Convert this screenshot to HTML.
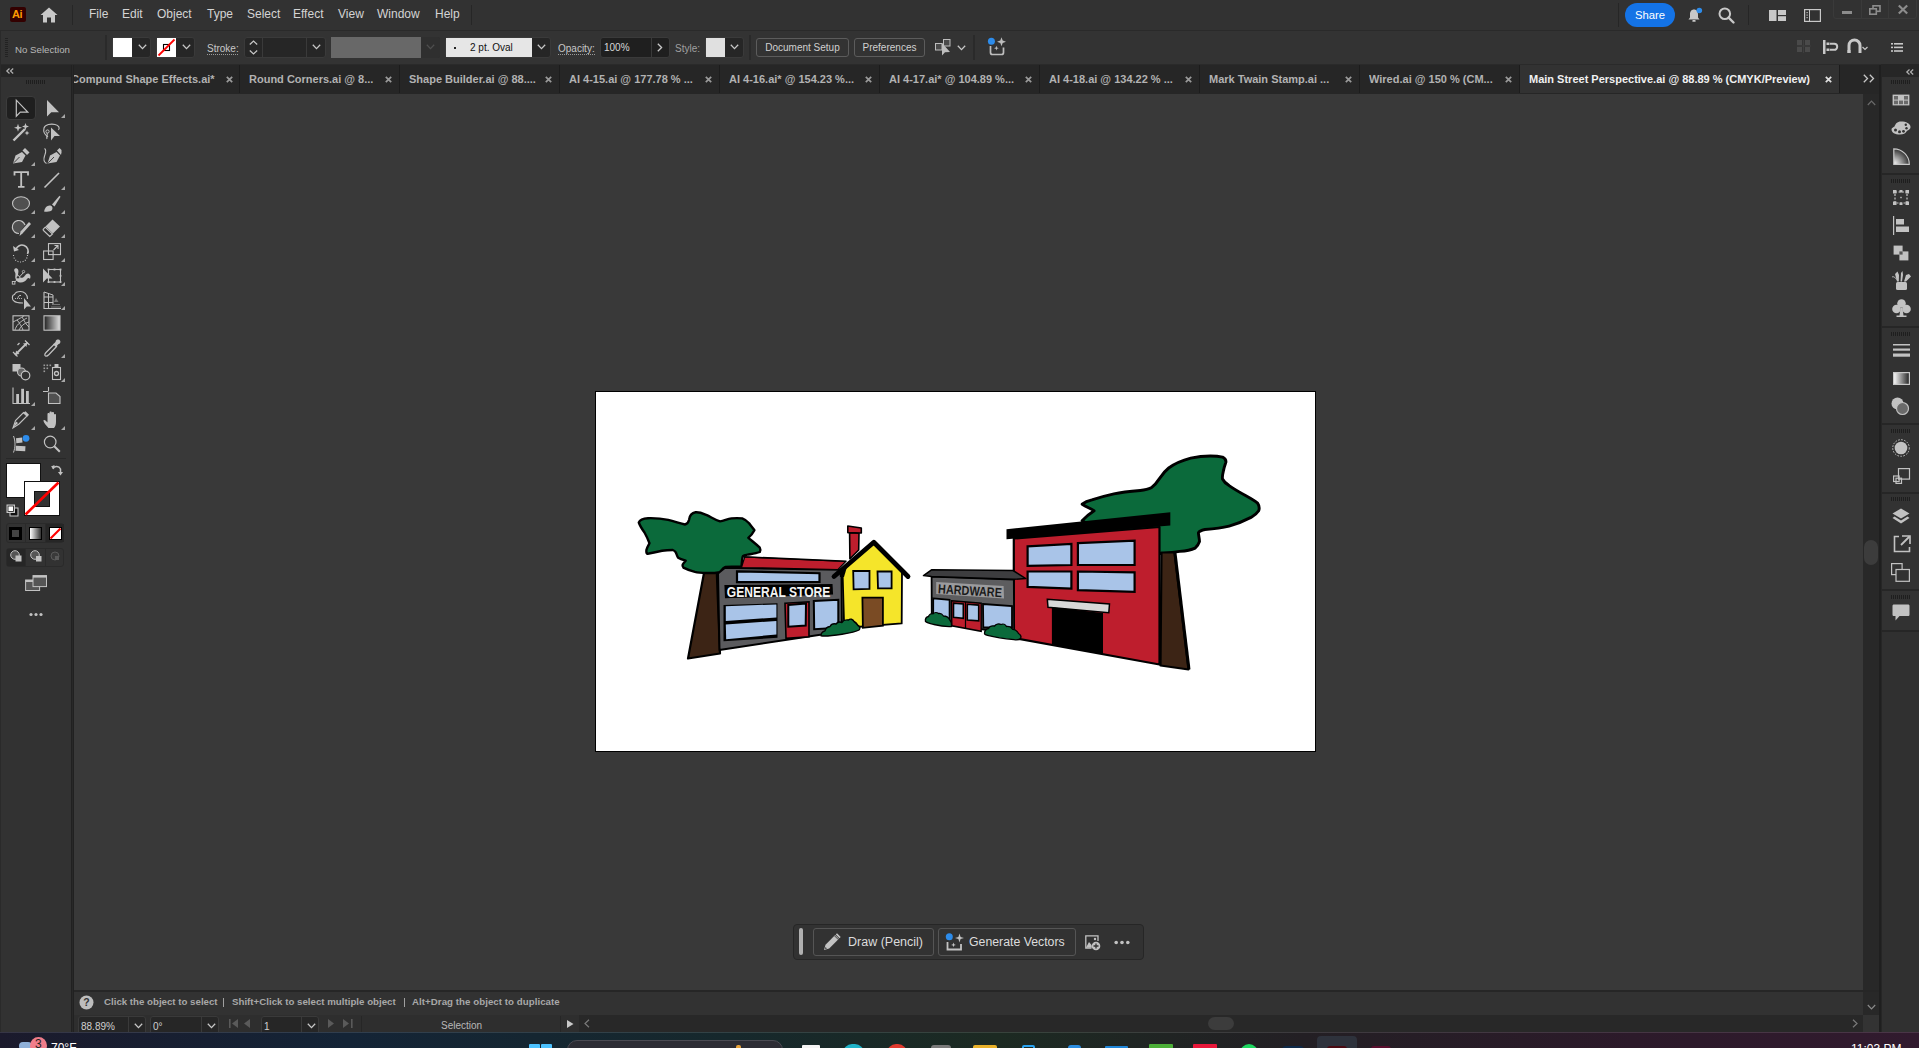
<!DOCTYPE html>
<html><head><meta charset="utf-8">
<style>
*{margin:0;padding:0;box-sizing:border-box}
html,body{width:1919px;height:1048px;overflow:hidden;background:#2b2b2b;font-family:"Liberation Sans",sans-serif;color:#c8c8c8}
.a{position:absolute}
.t{position:absolute;white-space:nowrap;line-height:1}
.mi{position:absolute;top:7px;font-size:12px;color:#d4d4d4;white-space:nowrap;line-height:14px}
.lbl{position:absolute;font-size:10px;color:#c4c4c4;white-space:nowrap;line-height:12px}
.dd{position:absolute;background:#262626;border:1px solid #3a3a3a;border-radius:3px}
.btn{position:absolute;border:1px solid #5c5c5c;border-radius:3px;font-size:10px;color:#d0d0d0;text-align:center;line-height:17px;white-space:nowrap}
.tab{position:absolute;top:74px;font-size:11px;font-weight:700;color:#b2b2b2;white-space:nowrap;line-height:11px;overflow:hidden}
.tsep{position:absolute;top:65px;width:1px;height:28px;background:#1c1c1c}
svg{position:absolute;overflow:visible}
</style></head>
<body>
<!-- ===== MENU BAR ===== -->
<div class="a" style="left:0;top:0;width:1919px;height:30px;background:#323232"></div>
<div class="a" style="left:10px;top:7px;width:16px;height:15px;background:#330000;border-radius:2px"></div>
<div class="t" style="left:12px;top:9px;font-size:11px;font-weight:700;color:#ff9a00;letter-spacing:-0.5px">Ai</div>
<svg style="left:40px;top:7px" width="18" height="16" viewBox="0 0 18 16"><path d="M9 0.5L17.5 8H15V15.5H11V10.5H7V15.5H3V8H0.5Z" fill="#c8c8c8"/></svg>
<div class="a" style="left:72px;top:5px;width:1px;height:20px;background:#262626"></div>
<div class="mi" style="left:89px">File</div>
<div class="mi" style="left:122px">Edit</div>
<div class="mi" style="left:157px">Object</div>
<div class="mi" style="left:207px">Type</div>
<div class="mi" style="left:247px">Select</div>
<div class="mi" style="left:293px">Effect</div>
<div class="mi" style="left:338px">View</div>
<div class="mi" style="left:377px">Window</div>
<div class="mi" style="left:435px">Help</div>
<div class="a" style="left:471px;top:5px;width:1px;height:20px;background:#262626"></div>
<!-- right of menubar -->
<div class="a" style="left:1618px;top:3px;width:1px;height:24px;background:#262626"></div>
<div class="a" style="left:1625px;top:3px;width:50px;height:24px;background:#1473e6;border-radius:12px"></div>
<div class="t" style="left:1635px;top:10px;font-size:11.3px;color:#fff">Share</div>
<svg style="left:1687px;top:8px" width="16" height="15" viewBox="0 0 16 15"><path d="M7 1.5C4.2 1.5 3 3.8 3 6.5V9.5L1.5 11.5H12.5L11 9.5V6.5C11 3.8 9.8 1.5 7 1.5Z" fill="#c8c8c8"/><rect x="5.3" y="12" width="3.4" height="1.8" rx="0.9" fill="#c8c8c8"/><circle cx="12.3" cy="2.5" r="2.8" fill="#2d8ceb"/></svg>
<svg style="left:1718px;top:7px" width="17" height="17" viewBox="0 0 17 17"><circle cx="6.8" cy="6.8" r="5.3" fill="none" stroke="#c8c8c8" stroke-width="2"/><path d="M10.6 10.6L15.5 15.5" stroke="#c8c8c8" stroke-width="2.4" stroke-linecap="round"/></svg>
<div class="a" style="left:1748px;top:5px;width:1px;height:20px;background:#262626"></div>
<svg style="left:1769px;top:10px" width="17" height="12" viewBox="0 0 17 12"><rect x="0" y="0" width="7.5" height="11" fill="#c8c8c8"/><rect x="9" y="0" width="8" height="5" fill="#c8c8c8"/><rect x="9" y="6.2" width="8" height="4.8" fill="#c8c8c8"/></svg>
<svg style="left:1804px;top:9px" width="17" height="13" viewBox="0 0 17 13"><rect x="0.6" y="0.6" width="15.8" height="11.8" fill="none" stroke="#c8c8c8" stroke-width="1.2"/><rect x="2.5" y="3" width="1.2" height="1.2" fill="#c8c8c8"/><rect x="2.5" y="5.5" width="1.2" height="1.2" fill="#c8c8c8"/><rect x="2.5" y="8" width="1.2" height="1.2" fill="#c8c8c8"/><rect x="5" y="1" width="1" height="11" fill="#c8c8c8"/></svg>
<div class="a" style="left:1833px;top:-1px;width:84px;height:20px;border:1px solid #3a3a3a;border-radius:0 0 3px 3px"></div>
<div class="a" style="left:1861px;top:0;width:1px;height:18px;background:#3a3a3a"></div>
<div class="a" style="left:1888px;top:0;width:1px;height:18px;background:#3a3a3a"></div>
<div class="a" style="left:1842px;top:11px;width:10px;height:3px;background:#8c8c8c"></div>
<svg style="left:1869px;top:5px" width="12" height="10" viewBox="0 0 12 10"><rect x="4" y="0.8" width="7" height="5.5" fill="none" stroke="#8c8c8c" stroke-width="1.6"/><rect x="0.8" y="3.8" width="6.5" height="5.4" fill="#323232" stroke="#8c8c8c" stroke-width="1.6"/></svg>
<svg style="left:1898px;top:5px" width="10" height="9" viewBox="0 0 10 9"><path d="M0.8 0.5L9.2 8.5M9.2 0.5L0.8 8.5" stroke="#8c8c8c" stroke-width="2.2"/></svg>

<!-- ===== OPTIONS BAR ===== -->
<div class="a" style="left:0;top:30px;width:1919px;height:35px;background:#2a2a2a"></div>
<div class="a" style="left:1px;top:31px;width:1918px;height:33px;background:#333333"></div>
<div id="grip1" class="a" style="left:5px;top:38px;width:3px;height:20px;background:repeating-linear-gradient(180deg,#222 0 1px,transparent 1px 2px)"></div>
<div class="lbl" style="left:15px;top:44px;font-size:9.7px;color:#b8b8b8">No Selection</div>
<div class="a" style="left:105px;top:35px;width:2px;height:25px;background:#2a2a2a"></div>
<!-- fill -->
<div class="dd" style="left:112px;top:37px;width:39px;height:21px"></div>
<div class="a" style="left:113px;top:38px;width:19px;height:19px;background:#fff"></div>
<svg style="left:138px;top:44px" width="9" height="6" viewBox="0 0 9 6"><path d="M0.8 0.8L4.5 4.6L8.2 0.8" fill="none" stroke="#c8c8c8" stroke-width="1.3"/></svg>
<!-- stroke -->
<div class="dd" style="left:156px;top:37px;width:39px;height:21px"></div>
<svg style="left:157px;top:38px" width="19" height="19" viewBox="0 0 19 19"><rect width="19" height="19" fill="#fff"/><rect x="6.5" y="6.5" width="6" height="6" fill="none" stroke="#000" stroke-width="1.1"/><path d="M1.5 17.5L17.5 1.5" stroke="#f00" stroke-width="1.8"/></svg>
<svg style="left:182px;top:44px" width="9" height="6" viewBox="0 0 9 6"><path d="M0.8 0.8L4.5 4.6L8.2 0.8" fill="none" stroke="#c8c8c8" stroke-width="1.3"/></svg>
<div class="lbl" style="left:207px;top:43px;color:#c8c8c8">Stroke:</div>
<div class="a" style="left:207px;top:54px;width:31px;height:1px;background:repeating-linear-gradient(90deg,#9a9a9a 0 1px,transparent 1px 2px)"></div>
<!-- stroke weight -->
<div class="dd" style="left:244px;top:37px;width:82px;height:21px"></div>
<div class="a" style="left:262px;top:38px;width:1px;height:19px;background:#3a3a3a"></div>
<div class="a" style="left:306px;top:38px;width:1px;height:19px;background:#3a3a3a"></div>
<svg style="left:249px;top:40px" width="9" height="15" viewBox="0 0 9 15"><path d="M0.8 4.5L4.5 1L8.2 4.5M0.8 10.5L4.5 14L8.2 10.5" fill="none" stroke="#c8c8c8" stroke-width="1.2"/></svg>
<svg style="left:312px;top:44px" width="9" height="6" viewBox="0 0 9 6"><path d="M0.8 0.8L4.5 4.6L8.2 0.8" fill="none" stroke="#c8c8c8" stroke-width="1.3"/></svg>
<!-- profile -->
<div class="a" style="left:331px;top:37px;width:109px;height:21px;background:#2f2f2f;border-radius:2px"></div>
<div class="a" style="left:331px;top:37px;width:90px;height:21px;background:#686868"></div>
<svg style="left:426px;top:44px" width="9" height="6" viewBox="0 0 9 6"><path d="M0.8 0.8L4.5 4.6L8.2 0.8" fill="none" stroke="#4e4e4e" stroke-width="1.3"/></svg>
<!-- brush -->
<div class="dd" style="left:445px;top:37px;width:106px;height:21px"></div>
<div class="a" style="left:446px;top:38px;width:86px;height:19px;background:#e6e6e6"></div>
<div class="a" style="left:454px;top:47px;width:2px;height:2px;background:#222"></div>
<div class="t" style="left:470px;top:43px;font-size:10px;color:#111">2 pt. Oval</div>
<svg style="left:537px;top:44px" width="9" height="6" viewBox="0 0 9 6"><path d="M0.8 0.8L4.5 4.6L8.2 0.8" fill="none" stroke="#c8c8c8" stroke-width="1.3"/></svg>
<div class="lbl" style="left:558px;top:43px;color:#c8c8c8">Opacity:</div>
<div class="a" style="left:558px;top:54px;width:37px;height:1px;background:repeating-linear-gradient(90deg,#9a9a9a 0 1px,transparent 1px 2px)"></div>
<div class="dd" style="left:600px;top:37px;width:70px;height:21px;background:#1f1f1f"></div>
<div class="a" style="left:651px;top:38px;width:1px;height:19px;background:#3a3a3a"></div>
<div class="t" style="left:604px;top:43px;font-size:10px;color:#d8d8d8">100%</div>
<svg style="left:657px;top:43px" width="6" height="9" viewBox="0 0 6 9"><path d="M0.8 0.8L4.6 4.5L0.8 8.2" fill="none" stroke="#c8c8c8" stroke-width="1.3"/></svg>
<div class="lbl" style="left:675px;top:43px;color:#a0a0a0">Style:</div>
<div class="dd" style="left:705px;top:37px;width:39px;height:21px"></div>
<div class="a" style="left:706px;top:38px;width:19px;height:19px;background:#e0e0e0"></div>
<svg style="left:730px;top:44px" width="9" height="6" viewBox="0 0 9 6"><path d="M0.8 0.8L4.5 4.6L8.2 0.8" fill="none" stroke="#c8c8c8" stroke-width="1.3"/></svg>
<div class="a" style="left:749px;top:35px;width:2px;height:25px;background:#2a2a2a"></div>
<div class="btn" style="left:756px;top:38px;width:93px;height:19px">Document Setup</div>
<div class="btn" style="left:854px;top:38px;width:71px;height:19px">Preferences</div>
<svg style="left:935px;top:39px" width="17" height="17" viewBox="0 0 17 17"><rect x="0.5" y="4.5" width="6.5" height="6.5" fill="#4a4a4a" stroke="#bdbdbd" stroke-width="1"/><rect x="8.5" y="0.5" width="6.5" height="6.5" fill="#4a4a4a" stroke="#bdbdbd" stroke-width="1"/><path d="M7 4V16.5L10 13.2L15 13Z" fill="#bdbdbd"/></svg>
<svg style="left:957px;top:45px" width="9" height="6" viewBox="0 0 9 6"><path d="M0.8 0.8L4.5 4.6L8.2 0.8" fill="none" stroke="#c8c8c8" stroke-width="1.3"/></svg>
<div class="a" style="left:973px;top:35px;width:2px;height:25px;background:#2a2a2a"></div>
<svg style="left:987px;top:37px" width="20" height="19" viewBox="0 0 20 19"><path d="M3.5 9V15.5Q3.5 17.5 5.5 17.5H14.5Q16.5 17.5 16.5 15.5V10.5" fill="none" stroke="#bdbdbd" stroke-width="1.7"/><path d="M14.5 0.3L15.7 3.6L19 4.8L15.7 6L14.5 9.3L13.3 6L10 4.8L13.3 3.6Z" fill="#bdbdbd"/><path d="M9.4 8.8L10 10.6L11.8 11.2L10 11.8L9.4 13.6L8.8 11.8L7 11.2L8.8 10.6Z" fill="#bdbdbd"/><circle cx="4.4" cy="4.3" r="3.5" fill="#2d8ceb"/></svg>
<!-- right side options -->
<svg style="left:1797px;top:40px" width="14" height="13" viewBox="0 0 14 13"><rect x="0" y="0" width="5" height="5" fill="#4a4a4a"/><rect x="8" y="0" width="5" height="5" fill="#4a4a4a"/><rect x="0" y="7" width="5" height="5" fill="#4a4a4a"/><rect x="8" y="7" width="5" height="5" fill="#4a4a4a"/><rect x="6" y="0" width="1" height="13" fill="#3e3e3e"/><rect x="0" y="5.5" width="14" height="1" fill="#3e3e3e"/></svg>
<svg style="left:1823px;top:40px" width="15" height="14" viewBox="0 0 15 14"><rect x="0" y="0" width="2.5" height="14" fill="#c8c8c8"/><rect x="3.5" y="2.5" width="3" height="2.5" fill="#c8c8c8"/><rect x="3.5" y="8.5" width="3" height="2.5" fill="#c8c8c8"/><path d="M7 3.8H11.2A3 3 0 0 1 11.2 9.8H7" fill="none" stroke="#c8c8c8" stroke-width="2"/></svg>
<svg style="left:1847px;top:39px" width="23" height="14" viewBox="0 0 23 14"><path d="M2 14V6.5A5.5 5.5 0 0 1 13 6.5V14" fill="none" stroke="#c8c8c8" stroke-width="3"/><rect x="0.5" y="11" width="3" height="3" fill="#c8c8c8"/><path d="M15.5 8L18 10.5L20.5 8" fill="none" stroke="#c8c8c8" stroke-width="1.2"/></svg>
<svg style="left:1891px;top:43px" width="12" height="9" viewBox="0 0 12 9"><rect x="0" y="0" width="2" height="1.6" fill="#c8c8c8"/><rect x="3" y="0" width="9" height="1.6" fill="#c8c8c8"/><rect x="0" y="3.6" width="2" height="1.6" fill="#c8c8c8"/><rect x="3" y="3.6" width="9" height="1.6" fill="#c8c8c8"/><rect x="0" y="7.2" width="2" height="1.6" fill="#c8c8c8"/><rect x="3" y="7.2" width="9" height="1.6" fill="#c8c8c8"/></svg>

<!-- ===== TABS ===== -->
<div class="a" style="left:0;top:65px;width:1919px;height:29px;background:#262626"></div>
<svg style="left:226px;top:76px" width="7" height="7" viewBox="0 0 7 7"><path d="M0.8 0.8L6.2 6.2M6.2 0.8L0.8 6.2" stroke="#9a9a9a" stroke-width="1.7"/></svg>
<div class="tsep" style="left:239px"></div>
<svg style="left:385px;top:76px" width="7" height="7" viewBox="0 0 7 7"><path d="M0.8 0.8L6.2 6.2M6.2 0.8L0.8 6.2" stroke="#9a9a9a" stroke-width="1.7"/></svg>
<div class="tsep" style="left:399px"></div>
<svg style="left:545px;top:76px" width="7" height="7" viewBox="0 0 7 7"><path d="M0.8 0.8L6.2 6.2M6.2 0.8L0.8 6.2" stroke="#9a9a9a" stroke-width="1.7"/></svg>
<div class="tsep" style="left:559px"></div>
<svg style="left:705px;top:76px" width="7" height="7" viewBox="0 0 7 7"><path d="M0.8 0.8L6.2 6.2M6.2 0.8L0.8 6.2" stroke="#9a9a9a" stroke-width="1.7"/></svg>
<div class="tsep" style="left:719px"></div>
<svg style="left:865px;top:76px" width="7" height="7" viewBox="0 0 7 7"><path d="M0.8 0.8L6.2 6.2M6.2 0.8L0.8 6.2" stroke="#9a9a9a" stroke-width="1.7"/></svg>
<div class="tsep" style="left:879px"></div>
<svg style="left:1025px;top:76px" width="7" height="7" viewBox="0 0 7 7"><path d="M0.8 0.8L6.2 6.2M6.2 0.8L0.8 6.2" stroke="#9a9a9a" stroke-width="1.7"/></svg>
<div class="tsep" style="left:1039px"></div>
<svg style="left:1185px;top:76px" width="7" height="7" viewBox="0 0 7 7"><path d="M0.8 0.8L6.2 6.2M6.2 0.8L0.8 6.2" stroke="#9a9a9a" stroke-width="1.7"/></svg>
<div class="tsep" style="left:1199px"></div>
<svg style="left:1345px;top:76px" width="7" height="7" viewBox="0 0 7 7"><path d="M0.8 0.8L6.2 6.2M6.2 0.8L0.8 6.2" stroke="#9a9a9a" stroke-width="1.7"/></svg>
<div class="tsep" style="left:1359px"></div>
<svg style="left:1505px;top:76px" width="7" height="7" viewBox="0 0 7 7"><path d="M0.8 0.8L6.2 6.2M6.2 0.8L0.8 6.2" stroke="#9a9a9a" stroke-width="1.7"/></svg>
<div class="a" style="left:73px;top:65px;width:150px;height:28px;overflow:hidden"><div class="tab" style="left:-2px;top:9px">Compund Shape Effects.ai*</div></div>
<div class="tab" style="left:249px">Round Corners.ai @ 8...</div>
<div class="tab" style="left:409px">Shape Builder.ai @ 88....</div>
<div class="tab" style="left:569px">AI 4-15.ai @ 177.78 % ...</div>
<div class="tab" style="left:729px">AI 4-16.ai* @ 154.23 %...</div>
<div class="tab" style="left:889px">AI 4-17.ai* @ 104.89 %...</div>
<div class="tab" style="left:1049px">AI 4-18.ai @ 134.22 % ...</div>
<div class="tab" style="left:1209px">Mark Twain Stamp.ai ...</div>
<div class="tab" style="left:1369px">Wired.ai @ 150 % (CM...</div>
<div class="tsep" style="left:1519px"></div>
<div class="a" style="left:1520px;top:65px;width:319px;height:28px;background:#323232"></div><div class="tsep" style="left:1839px"></div>
<div class="tab" style="left:1529px;color:#f0f0f0">Main Street Perspective.ai @ 88.89 % (CMYK/Preview)</div>
<svg style="left:1825px;top:76px" width="7" height="7" viewBox="0 0 7 7"><path d="M0.8 0.8L6.2 6.2M6.2 0.8L0.8 6.2" stroke="#e0e0e0" stroke-width="1.7"/></svg>
<svg style="left:1863px;top:74px" width="12" height="9" viewBox="0 0 12 9"><path d="M0.8 0.8L4.5 4.5L0.8 8.2M6.8 0.8L10.5 4.5L6.8 8.2" fill="none" stroke="#c8c8c8" stroke-width="1.3"/></svg>
<!-- ===== LEFT TOOLBAR ===== -->
<div class="a" style="left:0;top:65px;width:74px;height:967px;background:#212121"></div><div class="a" style="left:0;top:65px;width:1px;height:967px;background:#2a2a2a"></div><div class="a" style="left:72px;top:65px;width:1px;height:967px;background:#282828"></div>
<div class="a" style="left:1px;top:65px;width:70px;height:12px;background:#262626"></div>
<svg style="left:6px;top:68px" width="8" height="6" viewBox="0 0 8 6"><path d="M3.5 0.5L0.8 3L3.5 5.5M7.2 0.5L4.5 3L7.2 5.5" fill="none" stroke="#b0b0b0" stroke-width="1.2"/></svg>
<div class="a" style="left:1px;top:77px;width:70px;height:955px;background:#323232"></div>
<div class="a" style="left:26px;top:80px;width:20px;height:4px;background:repeating-linear-gradient(90deg,#1e1e1e 0 1px,transparent 1px 2px)"></div>
<div class="a" style="left:6px;top:96px;width:30px;height:24px;background:#1f1f1f;border:1px solid #3c3c3c;border-radius:4px"></div>
<svg style="left:12px;top:99px" width="18" height="18" viewBox="0 0 18 18"><path d="M4.3 1.2V17.2L8.3 13.2L15.8 13.2Z" fill="#1f1f1f" stroke="#c2c2c2" stroke-width="1.2" stroke-linejoin="miter"/></svg>
<svg style="left:42.5px;top:99px" width="18" height="18" viewBox="0 0 18 18"><path d="M4 1V17.5L8.3 13.3L16 13.3Z" fill="#c2c2c2"/></svg>
<svg style="left:61px;top:114px" width="4" height="4" viewBox="0 0 4 4"><path d="M4 0V4H0Z" fill="#a8a8a8"/></svg>
<svg style="left:12px;top:123px" width="18" height="18" viewBox="0 0 18 18"><path d="M1.5 17.5L13 6" stroke="#c2c2c2" stroke-width="2.4"/><path d="M6 0.8L7 3.8L10 4.8L7 5.8L6 8.8L5 5.8L2 4.8L5 3.8Z" fill="#c2c2c2"/><path d="M13.5 0L14.4 2.6L17 3.5L14.4 4.4L13.5 7L12.6 4.4L10 3.5L12.6 2.6Z" fill="#c2c2c2"/><path d="M15 7.5L15.7 9.3L17.5 10L15.7 10.7L15 12.5L14.3 10.7L12.5 10L14.3 9.3Z" fill="#c2c2c2"/></svg>
<svg style="left:42.5px;top:123px" width="18" height="18" viewBox="0 0 18 18"><path d="M5 14C2 12 0 9 1 5C2 1.5 8 0.5 12 1.5C16 2.5 17 5 15.5 7" fill="none" stroke="#c2c2c2" stroke-width="1.1"/><circle cx="4.5" cy="8.5" r="1.6" fill="none" stroke="#c2c2c2" stroke-width="1"/><path d="M4 10C5 12 3 14 4 16" fill="none" stroke="#c2c2c2" stroke-width="1.1"/><path d="M8 4.5V17.5L11.5 13L17 13Z" fill="#c2c2c2"/></svg>
<svg style="left:12px;top:147px" width="18" height="18" viewBox="0 0 18 18"><path d="M1 16.5L3.5 8.5L10 5L13.5 8.5L10 15Z" fill="#c2c2c2"/><path d="M10.5 3.5L13 1L17.5 5.5L15 8Z" fill="#c2c2c2"/><path d="M1.8 15.8L7.5 10" stroke="#323232" stroke-width="0.9"/></svg>
<svg style="left:31px;top:162px" width="4" height="4" viewBox="0 0 4 4"><path d="M4 0V4H0Z" fill="#a8a8a8"/></svg>
<svg style="left:42.5px;top:147px" width="18" height="18" viewBox="0 0 18 18"><path d="M4.5 16.5L7 8.5L13.5 5L17 8.5L13.5 15Z" fill="#c2c2c2"/><path d="M14 3.5L16.5 1L18.5 3L18.5 5.5L18 8Z" fill="#c2c2c2"/><path d="M5.3 15.8L11 10" stroke="#323232" stroke-width="0.9"/><path d="M1.5 1.5C4 3 2.5 6 1.5 9C0.5 12 0.8 15 3.5 16.5" fill="none" stroke="#c2c2c2" stroke-width="1.1"/></svg>
<svg style="left:12px;top:171px" width="18" height="18" viewBox="0 0 18 18"><path d="M2.5 4.5V1.2H16V4.5M9.2 1.2V15.8M6 15.8H12.5" fill="none" stroke="#c2c2c2" stroke-width="1.8"/></svg>
<svg style="left:31px;top:186px" width="4" height="4" viewBox="0 0 4 4"><path d="M4 0V4H0Z" fill="#a8a8a8"/></svg>
<svg style="left:42.5px;top:171px" width="18" height="18" viewBox="0 0 18 18"><path d="M1.5 16.5L16 2" stroke="#c2c2c2" stroke-width="1.6"/></svg>
<svg style="left:61px;top:186px" width="4" height="4" viewBox="0 0 4 4"><path d="M4 0V4H0Z" fill="#a8a8a8"/></svg>
<svg style="left:12px;top:195px" width="18" height="18" viewBox="0 0 18 18"><ellipse cx="9" cy="8.5" rx="8.5" ry="6.8" fill="#505050" stroke="#c2c2c2" stroke-width="1.1"/></svg>
<svg style="left:31px;top:210px" width="4" height="4" viewBox="0 0 4 4"><path d="M4 0V4H0Z" fill="#a8a8a8"/></svg>
<svg style="left:42.5px;top:195px" width="18" height="18" viewBox="0 0 18 18"><path d="M9 9.5L16.5 0.8L17.5 1.8L11.5 11.5Z" fill="#c2c2c2"/><path d="M1 16.5C2 12 4 10 7.5 10.5C9.5 11 10 13 9 15C8 16.5 5 17 1 16.5Z" fill="#c2c2c2"/></svg>
<svg style="left:61px;top:210px" width="4" height="4" viewBox="0 0 4 4"><path d="M4 0V4H0Z" fill="#a8a8a8"/></svg>
<svg style="left:12px;top:219px" width="18" height="18" viewBox="0 0 18 18"><path d="M7 14.5A6.5 6.5 0 1 1 13 6" fill="#505050" stroke="#c2c2c2" stroke-width="1.2"/><path d="M7.5 17L8.5 12.5L17 3L19 5L10.5 14.5Z" fill="#c2c2c2"/></svg>
<svg style="left:31px;top:234px" width="4" height="4" viewBox="0 0 4 4"><path d="M4 0V4H0Z" fill="#a8a8a8"/></svg>
<svg style="left:42.5px;top:219px" width="18" height="18" viewBox="0 0 18 18"><path d="M9.5 0.5L17 7.5L10 14.5L2.5 7.5Z" fill="#c2c2c2"/><path d="M2.2 8.2L9.5 15L6.8 17.5L0.5 11.5C0 11 0 10.5 0.5 10Z" fill="none" stroke="#c2c2c2" stroke-width="1.1"/></svg>
<svg style="left:61px;top:234px" width="4" height="4" viewBox="0 0 4 4"><path d="M4 0V4H0Z" fill="#a8a8a8"/></svg>
<svg style="left:12px;top:243px" width="18" height="18" viewBox="0 0 18 18"><path d="M4 6.5A6.2 6.2 0 1 1 15.5 11" fill="none" stroke="#c2c2c2" stroke-width="1.6" stroke-dasharray="0"/><path d="M1 3L2 8.5L7 7Z" fill="#c2c2c2"/><path d="M15.5 12A6.5 6.5 0 0 1 1.5 12" fill="none" stroke="#c2c2c2" stroke-width="1.1" stroke-dasharray="1 1.6"/></svg>
<svg style="left:31px;top:258px" width="4" height="4" viewBox="0 0 4 4"><path d="M4 0V4H0Z" fill="#a8a8a8"/></svg>
<svg style="left:42.5px;top:243px" width="18" height="18" viewBox="0 0 18 18"><rect x="5.5" y="0.6" width="12" height="11" fill="none" stroke="#c2c2c2" stroke-width="1.1"/><rect x="0.6" y="8" width="9.5" height="8.5" fill="none" stroke="#c2c2c2" stroke-width="1.1"/><path d="M10.5 7L15 2.5M11.5 2.5H15V6" fill="none" stroke="#c2c2c2" stroke-width="1.1"/></svg>
<svg style="left:61px;top:258px" width="4" height="4" viewBox="0 0 4 4"><path d="M4 0V4H0Z" fill="#a8a8a8"/></svg>
<svg style="left:12px;top:267px" width="18" height="18" viewBox="0 0 18 18"><path d="M2.5 4.5C1.5 2.5 3 0.5 5 1.5C7 2.5 6.5 5.5 6 7.5C6.5 10 8.5 11.5 11 10.5C13 9.5 13.5 6.5 16 6.5C18.5 6.8 19 9.5 18 12C17 10.5 15.8 10.8 15 12C13.5 14.5 11 15.8 8 15.5C4.5 15 3 12 3.3 9C3.5 7.5 3.8 6 2.5 4.5Z" fill="#c2c2c2"/><path d="M1.5 16.5L12 5" stroke="#c2c2c2" stroke-width="1"/><circle cx="6" cy="10.3" r="1.7" fill="#323232" stroke="#c2c2c2" stroke-width="0.9"/><circle cx="11.5" cy="4.6" r="1.2" fill="#323232" stroke="#c2c2c2" stroke-width="0.8"/><rect x="0.3" y="14.5" width="2.6" height="2.6" fill="#323232" stroke="#c2c2c2" stroke-width="0.9"/></svg>
<svg style="left:31px;top:282px" width="4" height="4" viewBox="0 0 4 4"><path d="M4 0V4H0Z" fill="#a8a8a8"/></svg>
<svg style="left:42.5px;top:267px" width="18" height="18" viewBox="0 0 18 18"><path d="M0 1.5V15.5L3.8 11.5L9.5 11.5Z" fill="#c2c2c2"/><rect x="5.5" y="2.5" width="12" height="12.5" fill="none" stroke="#c2c2c2" stroke-width="1.1"/><rect x="4.6" y="1.6" width="1.8" height="1.8" fill="#c2c2c2"/><rect x="10.6" y="1.6" width="1.8" height="1.8" fill="#c2c2c2"/><rect x="16.6" y="1.6" width="1.8" height="1.8" fill="#c2c2c2"/><rect x="16.6" y="7.9" width="1.8" height="1.8" fill="#c2c2c2"/><rect x="16.6" y="14.1" width="1.8" height="1.8" fill="#c2c2c2"/><rect x="10.6" y="14.1" width="1.8" height="1.8" fill="#c2c2c2"/><rect x="4.6" y="14.1" width="1.8" height="1.8" fill="#c2c2c2"/></svg>
<svg style="left:61px;top:282px" width="4" height="4" viewBox="0 0 4 4"><path d="M4 0V4H0Z" fill="#a8a8a8"/></svg>
<svg style="left:12px;top:291px" width="18" height="18" viewBox="0 0 18 18"><path d="M15.5 8C15.5 3 12 0.5 8.5 0.5C5 0.5 3 2 2.5 3.5C-0.5 4 0 9 2 10C4 12 8 12 11 12" fill="none" stroke="#c2c2c2" stroke-width="1.1"/><path d="M6 6.8C6 5.3 7.5 4 9 4.5" fill="none" stroke="#c2c2c2" stroke-width="1"/><circle cx="3.5" cy="7.5" r="0.6" fill="#c2c2c2"/><circle cx="5.5" cy="7.5" r="0.6" fill="#c2c2c2"/><circle cx="7.5" cy="7.5" r="0.6" fill="#c2c2c2"/><circle cx="9.5" cy="7.5" r="0.6" fill="#c2c2c2"/><path d="M12 7V18.5L14.8 15.5L19 15.5Z" fill="#c2c2c2"/></svg>
<svg style="left:31px;top:306px" width="4" height="4" viewBox="0 0 4 4"><path d="M4 0V4H0Z" fill="#a8a8a8"/></svg>
<svg style="left:42.5px;top:291px" width="18" height="18" viewBox="0 0 18 18"><path d="M1 1V17.5H18" fill="none" stroke="#c2c2c2" stroke-width="1.1"/><path d="M1 1L10 4V14M1 6H10M1 11.5H10M5.5 2.5V17" fill="none" stroke="#c2c2c2" stroke-width="1"/><path d="M11 11L13 7L15.5 11ZM9 13H17V14H9ZM8 15.5H18V16.5H8Z" fill="#777"/></svg>
<svg style="left:61px;top:306px" width="4" height="4" viewBox="0 0 4 4"><path d="M4 0V4H0Z" fill="#a8a8a8"/></svg>
<svg style="left:12px;top:315px" width="18" height="18" viewBox="0 0 18 18"><rect x="1" y="0.8" width="16" height="14.4" fill="none" stroke="#c2c2c2" stroke-width="1.1"/><path d="M1 7C5 5 9 3 12 0.8M3 15C4 11 7 7 15 3M7 15C9 11 12 8 17 7M5 5C7 7 10 12 11 15M10 2C12 5 14 10 17 12" fill="none" stroke="#c2c2c2" stroke-width="0.9"/></svg>
<svg style="left:42.5px;top:315px" width="18" height="18" viewBox="0 0 18 18"><defs><linearGradient id="g1" x1="0" x2="1"><stop offset="0" stop-color="#202020"/><stop offset="1" stop-color="#e0e0e0"/></linearGradient></defs><rect x="1" y="0.8" width="16" height="14.4" fill="url(#g1)" stroke="#c2c2c2" stroke-width="1.1"/></svg>
<svg style="left:12px;top:339px" width="18" height="18" viewBox="0 0 18 18"><path d="M3 16L15.5 3.5" stroke="#c2c2c2" stroke-width="1.8"/><path d="M1 13L5.5 17.5M13 1.5L17.5 6" stroke="#c2c2c2" stroke-width="1.2"/><path d="M3.5 15.5L4 11.5L7.5 15ZM15 4L14.5 8L11 4.5Z" fill="#c2c2c2"/><path d="M5.5 6L7.5 4" stroke="#c2c2c2" stroke-width="1.3"/></svg>
<svg style="left:42.5px;top:339px" width="18" height="18" viewBox="0 0 18 18"><path d="M11.5 5L3 13.5C1.5 15 1.5 16.5 2.5 17C3.5 17.5 4.5 17 6 15.5L14 7" fill="none" stroke="#c2c2c2" stroke-width="1.2"/><path d="M10 5.5L12.5 3L12.8 1.8C13.5 0.6 15 0 16.3 0.8C17.8 1.8 17.8 3.8 16.5 4.8L15.3 5.3L13 8L10 5.5Z" fill="#c2c2c2"/></svg>
<svg style="left:61px;top:354px" width="4" height="4" viewBox="0 0 4 4"><path d="M4 0V4H0Z" fill="#a8a8a8"/></svg>
<svg style="left:12px;top:363px" width="18" height="18" viewBox="0 0 18 18"><rect x="0.5" y="1" width="8" height="7.5" fill="#c2c2c2"/><circle cx="9.5" cy="9" r="4" fill="#666" stroke="#c2c2c2" stroke-width="1.1"/><circle cx="13.5" cy="12.5" r="4.3" fill="#323232" stroke="#c2c2c2" stroke-width="1.2"/></svg>
<svg style="left:42.5px;top:363px" width="18" height="18" viewBox="0 0 18 18"><rect x="9.5" y="4.5" width="8" height="12" fill="none" stroke="#c2c2c2" stroke-width="1.1"/><rect x="11.5" y="1" width="4" height="3.5" fill="#c2c2c2"/><circle cx="13.5" cy="10.5" r="2" fill="none" stroke="#c2c2c2" stroke-width="1.3"/><rect x="0.5" y="1.5" width="1.6" height="1.6" fill="#9a9a9a"/><rect x="3.5" y="1.5" width="1.6" height="1.6" fill="#9a9a9a"/><rect x="6.5" y="1.5" width="1.6" height="1.6" fill="#9a9a9a"/><rect x="0.5" y="4.5" width="1.6" height="1.6" fill="#9a9a9a"/><rect x="3.5" y="4.5" width="1.6" height="1.6" fill="#9a9a9a"/><rect x="0.5" y="7.5" width="1.6" height="1.6" fill="#9a9a9a"/></svg>
<svg style="left:61px;top:378px" width="4" height="4" viewBox="0 0 4 4"><path d="M4 0V4H0Z" fill="#a8a8a8"/></svg>
<svg style="left:12px;top:387px" width="18" height="18" viewBox="0 0 18 18"><path d="M1 0.5V16.5H18" fill="none" stroke="#c2c2c2" stroke-width="1.1"/><rect x="4.2" y="7" width="2.8" height="9" fill="#c2c2c2"/><rect x="9.2" y="1.8" width="2.8" height="14.2" fill="#c2c2c2"/><rect x="14" y="4" width="2.8" height="12" fill="#c2c2c2"/></svg>
<svg style="left:31px;top:402px" width="4" height="4" viewBox="0 0 4 4"><path d="M4 0V4H0Z" fill="#a8a8a8"/></svg>
<svg style="left:42.5px;top:387px" width="18" height="18" viewBox="0 0 18 18"><path d="M5.5 0V4.5M0 4.5H5" stroke="#c2c2c2" stroke-width="1.1"/><path d="M5.5 6H13L17 9.5V16.5H5.5Z" fill="#505050" stroke="#c2c2c2" stroke-width="1.1"/></svg>
<svg style="left:12px;top:411px" width="18" height="18" viewBox="0 0 18 18"><path d="M1 17L3.5 9.5L11.5 1.5L15 5L7 13Z" fill="none" stroke="#c2c2c2" stroke-width="1.1"/><path d="M11 2L13.5 0.3L17 3.8L15.5 5.5Z" fill="#c2c2c2"/><path d="M1.2 16.8L6 12L4 10.5Z" fill="#c2c2c2"/></svg>
<svg style="left:31px;top:426px" width="4" height="4" viewBox="0 0 4 4"><path d="M4 0V4H0Z" fill="#a8a8a8"/></svg>
<svg style="left:42.5px;top:411px" width="18" height="18" viewBox="0 0 18 18"><path d="M5.5 17C3.5 15 1 12 0.5 10C0.2 9 1.5 8.5 2.5 9.5L4.5 11.5V3C4.5 1.7 6.5 1.7 6.5 3V8V1.5C6.5 0.2 8.8 0.2 8.8 1.5V8V2C8.8 0.7 11 0.7 11 2V8.5V4C11 2.8 13 2.8 13 4V11C13 14 12 16 11 17Z" fill="#c2c2c2"/></svg>
<svg style="left:61px;top:426px" width="4" height="4" viewBox="0 0 4 4"><path d="M4 0V4H0Z" fill="#a8a8a8"/></svg>
<svg style="left:12px;top:435px" width="18" height="18" viewBox="0 0 18 18"><path d="M1.5 1C3.5 6 3.5 12 1.5 17.5" fill="none" stroke="#c2c2c2" stroke-width="1"/><path d="M4 3.2L10 2.6L10.5 7.5L4.3 8.2Z" fill="#c2c2c2"/><path d="M3.8 10.8L13.5 11.3L13.2 16.3L3.5 15.8Z" fill="#c2c2c2"/><circle cx="14" cy="3.3" r="3.4" fill="#2d8ceb"/></svg>
<svg style="left:42.5px;top:435px" width="18" height="18" viewBox="0 0 18 18"><circle cx="7.2" cy="7" r="5.8" fill="none" stroke="#c2c2c2" stroke-width="1.2"/><path d="M11.3 11.2L16.8 16.7" stroke="#c2c2c2" stroke-width="2"/></svg>
<div class="a" style="left:6px;top:458px;width:60px;height:1px;background:#282828"></div>
<div class="a" style="left:6px;top:463px;width:35px;height:35px;background:#fff;border:1px solid #111"></div>
<div class="a" style="left:24px;top:481px;width:36px;height:35px;background:#fff;border:1px solid #111"></div>
<div class="a" style="left:34px;top:491px;width:16px;height:16px;background:#323232;border:1px solid #111"></div>
<svg style="left:25px;top:482px" width="34" height="33" viewBox="0 0 34 33"><path d="M0.5 32.5L33.5 0.5" stroke="#f00" stroke-width="2.6"/></svg>
<svg style="left:51px;top:464px" width="12" height="12" viewBox="0 0 12 12"><path d="M1.5 4.5C4 1.5 8 2 9.5 5V9" fill="none" stroke="#c2c2c2" stroke-width="1.5"/><path d="M0 2.5L3.5 1L3 5.5Z" fill="#c2c2c2"/><path d="M7 8L9.5 11.5L12 8Z" fill="#c2c2c2"/></svg>
<svg style="left:6px;top:504px" width="13" height="13" viewBox="0 0 13 13"><rect x="4" y="4" width="8" height="8" fill="#111" stroke="#c8c8c8" stroke-width="1"/><rect x="1" y="1" width="7.5" height="7.5" fill="#fff" stroke="#c8c8c8" stroke-width="1"/><rect x="2" y="2" width="5.5" height="5.5" fill="#fff" stroke="#111" stroke-width="0.8"/></svg>
<div class="a" style="left:6px;top:523px;width:58px;height:20px;border:1px solid #2a2a2a;border-radius:3px"></div>
<div class="a" style="left:45px;top:524px;width:19px;height:18px;background:#262626"></div>
<div class="a" style="left:25px;top:524px;width:1px;height:18px;background:#2a2a2a"></div>
<div class="a" style="left:45px;top:524px;width:1px;height:18px;background:#2a2a2a"></div>
<div class="a" style="left:9px;top:527px;width:13px;height:13px;background:#444;border:3px solid #000"></div>
<div class="a" style="left:29px;top:527px;width:13px;height:13px;background:linear-gradient(90deg,#fff,#333);border:1px solid #000"></div>
<svg style="left:49px;top:527px" width="13" height="13" viewBox="0 0 13 13"><rect x="0.5" y="0.5" width="12" height="12" fill="#fff" stroke="#000" stroke-width="1"/><path d="M1.5 11.5L11.5 1.5" stroke="#f00" stroke-width="2.2"/></svg>
<div class="a" style="left:6px;top:548px;width:58px;height:19px;border:1px solid #2a2a2a;border-radius:3px"></div>
<div class="a" style="left:7px;top:549px;width:18px;height:17px;background:#262626"></div>
<div class="a" style="left:25px;top:549px;width:1px;height:17px;background:#2a2a2a"></div>
<div class="a" style="left:45px;top:549px;width:1px;height:17px;background:#2a2a2a"></div>
<svg style="left:10px;top:550px" width="12" height="12" viewBox="0 0 12 12"><circle cx="5" cy="5" r="4.3" fill="#555" stroke="#c2c2c2" stroke-width="1"/><rect x="5.5" y="5.5" width="6" height="6" fill="#c2c2c2"/></svg>
<svg style="left:30px;top:550px" width="12" height="12" viewBox="0 0 12 12"><circle cx="5" cy="5" r="4.3" fill="#555" stroke="#c2c2c2" stroke-width="1"/><rect x="6" y="6" width="5.5" height="5.5" fill="#c2c2c2"/></svg>
<svg style="left:50px;top:551px" width="10" height="10" viewBox="0 0 10 10"><circle cx="5" cy="5" r="4" fill="#3a3a3a" stroke="#5a5a5a" stroke-width="1"/><rect x="5" y="5" width="4" height="4" fill="#5a5a5a"/></svg>
<svg style="left:25px;top:575px" width="22" height="16" viewBox="0 0 22 16"><rect x="0.6" y="5" width="14" height="10.5" fill="#555" stroke="#c2c2c2" stroke-width="1"/><rect x="0.6" y="5" width="14" height="2" fill="#c2c2c2"/><rect x="8" y="0.6" width="13.5" height="11" fill="#555" stroke="#c2c2c2" stroke-width="1"/><rect x="8" y="0.6" width="13.5" height="2" fill="#c2c2c2"/></svg>
<svg style="left:29px;top:612px" width="14" height="5" viewBox="0 0 14 5"><circle cx="2" cy="2.5" r="1.6" fill="#c2c2c2"/><circle cx="7" cy="2.5" r="1.6" fill="#c2c2c2"/><circle cx="12" cy="2.5" r="1.6" fill="#c2c2c2"/></svg>
<!-- ===== CANVAS ===== -->
<div class="a" style="left:74px;top:94px;width:1789px;height:896px;background:#393939"></div>
<div class="a" style="left:1863px;top:94px;width:16px;height:921px;background:#282828"></div>
<svg style="left:1867px;top:100px" width="9" height="6" viewBox="0 0 9 6"><path d="M0.8 5L4.5 1.2L8.2 5" fill="none" stroke="#6a6a6a" stroke-width="1.2"/></svg>
<svg style="left:1867px;top:1004px" width="9" height="6" viewBox="0 0 9 6"><path d="M0.8 1L4.5 4.8L8.2 1" fill="none" stroke="#8a8a8a" stroke-width="1.2"/></svg>
<div class="a" style="left:1864px;top:540px;width:14px;height:25px;background:#3c3c3c;border-radius:7px"></div>
<div class="a" style="left:595px;top:391px;width:721px;height:361px;background:#fff;border:1px solid #000"></div>
<svg style="left:596px;top:392px" width="718" height="358" viewBox="596 392 718 358">
<path d="M704 573L716.8 573L720 653.5L688 658.5Z" fill="#3c2415" stroke="#000" stroke-width="2.2" stroke-linejoin="round"/>
<path d="M638.8 522.5C640 519.5 643 518.4 648 518.2C655 518 662 518.6 668.2 519.9C675 521.5 680 523.5 685 524.5C688 524 688.5 522 689 520C689.5 516 691 513 695.6 512.3C700 512 703 513.5 706.3 514.9C711 517 715 520 720 521.4C724 521 727 519 731.5 518.4C735 518 739 518 742.2 518.4C745 519.5 747 521 749.1 523.3C751 526 753 528 754.4 530.2C753 533 751 535.5 748.3 537.8C752 541 756 544 759.8 547.7C760.5 549 760.5 551 759.8 552C756 553.5 751 554 747.6 554.6C745 555 743.5 555.5 743 556.1C742 558 742 561 741.5 566.5C735 566.8 729 566.8 725.5 567C722.5 568 721.5 570.5 720 572.2C715 573 711 573.2 706.3 573C702 572.8 698 572.5 694.9 571.8C690 570.5 686 569 683.4 567.6C682.5 566.5 682.3 565.5 682.7 564.5C683.5 563 685 561.5 685.7 560.7C682 559.5 679.5 558.5 678.1 557.7C677 556 676.5 554 675.8 552.3C675 551 674 550.5 672.7 550C669 550 665 550.3 662 550.8C657 551.8 652 553 647.6 553.9C646.5 553.5 646.2 552 646.4 550C647 547.5 648.5 545 649.5 543.2C648 539.5 646.5 536 644.5 532.5C642 529 640 526 638.8 522.5Z" fill="#0b6a3b" stroke="#000" stroke-width="2.4" stroke-linejoin="round"/>
<path d="M718 573.6L725 567.8L841.5 569.8L842 631.5L719.5 650Z" fill="#5b5b5e" stroke="#000" stroke-width="2" stroke-linejoin="round"/>
<path d="M744.7 557L845.7 561.5L838 569.5L741.5 567.5Z" fill="#be1e2d" stroke="#000" stroke-width="1.2" stroke-linejoin="round"/>
<path d="M744 556.8L846.5 561.3" stroke="#000" stroke-width="1.6"/>
<path d="M737 571.3L819.5 573.2L819.5 581.8L737 582.2Z" fill="#a9c4e8" stroke="#000" stroke-width="2.2"/>
<path d="M724.4 585.1L832.5 584L833.1 594.4L725 598.3Z" fill="#000"/>
<text x="726.8" y="597" font-family="Liberation Sans" font-weight="700" font-size="14.5" fill="#f4f4f4" textLength="103.5" lengthAdjust="spacingAndGlyphs">GENERAL STORE</text>
<path d="M723.5 605L777.5 603.3L777.5 637.8L723.5 641.3Z" fill="#000"/>
<path d="M725.8 606.3L776.4 604.4L776.4 617.5L725.8 621Z" fill="#a9c4e8"/>
<path d="M725.8 624.4L776.4 620.9L776.4 634.5L726.2 639.2Z" fill="#a9c4e8"/>
<path d="M785 603.2L809 601.8L809 636.8L786 638.3Z" fill="#be1e2d" stroke="#000" stroke-width="1.6"/>
<path d="M788.3 605L806 603.4L805.7 625.6L788.3 626.7Z" fill="#a9c4e8" stroke="#000" stroke-width="2"/>
<path d="M813.8 601L838.3 599.7L838.3 627.7L814.2 629.2Z" fill="#a9c4e8" stroke="#000" stroke-width="2"/>
<path d="M849.6 532.6L859 533.1L858.7 550L849.9 558.7Z" fill="#be1e2d" stroke="#000" stroke-width="1.6" stroke-linejoin="round"/>
<path d="M847.8 526L861.3 528L861.3 533L847.8 532.6Z" fill="#be1e2d" stroke="#000" stroke-width="1.6" stroke-linejoin="round"/>
<path d="M842.5 570L873.8 543L902 572L901.7 623.4L844.2 628Z" fill="#f5e52a" stroke="#000" stroke-width="1.8" stroke-linejoin="round"/>
<path d="M839 571L848 563.5L844 577L840 577Z" fill="#000"/><path d="M834 576.5L873.8 542.3L908 576.5" fill="none" stroke="#000" stroke-width="4.8" stroke-linejoin="round" stroke-linecap="round"/>
<path d="M853.2 571L869.5 571L869.5 588.8L853.6 589.3Z" fill="#a9c4e8" stroke="#000" stroke-width="1.8"/>
<path d="M877.5 571.5L891.6 571.5L891.6 588.3L878 588.3Z" fill="#a9c4e8" stroke="#000" stroke-width="1.8"/>
<path d="M862.4 597.6L882.9 597.6L882.9 625.6L862.9 627.8Z" fill="#7a4b24" stroke="#000" stroke-width="1.8"/>
<path d="M821 635.8C821 633.5 822.5 631.5 825 630.8C825.5 628.5 827.5 626.8 830 626.5C831 624.5 833.5 623.5 836 624C837.5 622 840 621.8 842 622.5C843 620.5 846 619.5 848.5 620C850 618.5 853 619 854 621.5C856 622.5 857 624 858 625.5C860 626.5 860.5 628.5 859 630C856 631.8 850 633 842 634.2C835 635.3 827 636.5 821 635.8Z" fill="#0b6a3b" stroke="#000" stroke-width="1.4" stroke-linejoin="round"/>
<path d="M1082.1 504.2C1085 502 1088 500.8 1091.9 499.9C1099 497.5 1106 495.5 1113.9 493.8C1122 492.2 1131 491.3 1140.2 490.5C1145 490 1148.5 489.2 1151.2 487.8C1155 485 1158 481 1160 477.9C1163 473.5 1165.5 470.5 1168.7 468C1175 463.5 1182 460.5 1190.7 458.2C1197 456.8 1203 456 1210.4 456C1215 456 1219 456.3 1222.5 457.1C1225 458.5 1226.3 460.5 1225.8 462.6C1225 465 1224 467.5 1223.6 470.2C1222.8 473.5 1222 476.5 1222.5 479C1224 482 1226.5 484 1229.1 485.6C1234 489 1240 492.5 1245.5 495.5C1250 498 1254.5 500.5 1257.6 503.1C1259.2 505.5 1259.5 508.5 1258.7 510.8C1257 513.5 1254 515.7 1251 517.4C1244 521 1237 524 1229.1 526.2C1221 528.3 1213 529 1204.9 529.5C1201.5 530.3 1199 531.5 1198.4 532.8C1198.5 535.5 1199.5 538.5 1199.5 541.5C1198.5 544.5 1197 546.5 1195.1 548.1C1190 550.5 1185 551 1179.7 551.4C1177 551.8 1174.5 552.2 1172 552.5L1161 553.6L1100 530L1082.1 520.7C1086 516.5 1090 513.5 1094.1 510.8C1090 508.5 1086 506.5 1082.1 504.2Z" fill="#0b6a3b" stroke="#000" stroke-width="2.9" stroke-linejoin="round"/>
<path d="M1161.5 552.5L1174.5 552.5L1188.5 669.5L1160.5 665.5Z" fill="#3c2415" stroke="#000" stroke-width="2.2" stroke-linejoin="round"/><path d="M1175 553L1189 669.5" stroke="#000" stroke-width="3"/>
<path d="M1013.8 538.5L1159.5 527L1159.5 664.5L1013.8 638Z" fill="#be1e2d" stroke="#000" stroke-width="2.2" stroke-linejoin="round"/>
<path d="M1006.5 529.3L1170.3 512.3L1170.3 525.5L1006.5 539.3Z" fill="#000"/>
<path d="M1027.6 546.4L1071.4 543.9L1071.4 565L1027.6 565.8Z" fill="#a9c4e8" stroke="#000" stroke-width="2.2"/>
<path d="M1077.9 543.1L1134.6 540.7L1134.6 565L1077.9 565Z" fill="#a9c4e8" stroke="#000" stroke-width="2.2"/>
<path d="M1027.6 571.5L1071.4 571.5L1071.4 588.5L1027.6 586.9Z" fill="#a9c4e8" stroke="#000" stroke-width="2.2"/>
<path d="M1077.9 571.5L1134.6 572.3L1134.6 591.8L1077.9 590.2Z" fill="#a9c4e8" stroke="#000" stroke-width="2.2"/>
<path d="M1047.3 599.3L1109.5 604L1108.8 612.8L1048 607.3Z" fill="#d8d8d8" stroke="#000" stroke-width="1.5"/>
<path d="M1051.9 607.2L1103 612.9L1103 654.2L1051.9 644.5Z" fill="#000"/>
<path d="M931.6 576.6L1013.8 579.5L1014.2 633.5L931.8 622.6Z" fill="#5d5d5f" stroke="#000" stroke-width="1.8" stroke-linejoin="round"/>
<path d="M923.5 575.6L931.5 569.8L1013 570.5L1025.8 578.6L1013.5 579.3L931.5 576.6Z" fill="#3d3d3f" stroke="#000" stroke-width="1.5" stroke-linejoin="round"/>
<path d="M936.2 581.9L1003.6 586L1004 598.5L936.2 594.1Z" fill="#9b9b9d"/>
<text x="0" y="0" font-family="Liberation Sans" font-weight="700" font-size="13" fill="#1a1a1a" textLength="64" lengthAdjust="spacingAndGlyphs" transform="translate(937.8 593.3) rotate(3.4)">HARDWARE</text>
<path d="M933.2 598.3L949.6 599.8L949.6 620L933.2 616Z" fill="#a9c4e8" stroke="#000" stroke-width="1.8"/>
<path d="M951.5 600.8L981.2 603.2L981.2 631.3L951.8 625.8Z" fill="#be1e2d" stroke="#000" stroke-width="1.4"/>
<path d="M965.5 602L965.5 628.8" stroke="#000" stroke-width="1.2"/>
<path d="M953.5 603.1L963.3 603.9L963.3 618.4L953.5 617.3Z" fill="#a9c4e8" stroke="#000" stroke-width="1.6"/>
<path d="M967.3 604.3L978.7 605.1L978.7 620.8L967.3 620Z" fill="#a9c4e8" stroke="#000" stroke-width="1.6"/>
<path d="M983 604L1012 606L1012 627.5L983.3 627.5Z" fill="#a9c4e8" stroke="#000" stroke-width="1.8"/>
<path d="M925.5 621.5C925 619 926.5 617 928.5 616.5C929 614.5 931 613.3 933 613.8C934.5 612.3 937 612.3 938.5 613.5C940.5 613 942.5 614.5 943.5 616C946 616 948.5 617.5 949.5 619.5C951 621 951.8 623.5 951.5 626.5C946 626.8 940 626 934 624.5C930 623.5 927 622.8 925.5 621.5Z" fill="#0b6a3b" stroke="#000" stroke-width="1.3" stroke-linejoin="round"/>
<path d="M984.5 633.5C984.5 631 986 629 988.5 628.5C989.5 626.5 992 625.5 994.5 626C996 624 999 623.5 1001 624.5C1003 623.5 1005.5 624.5 1006.5 626.5C1009 626.3 1011.5 627.5 1012.5 629.3C1015 629.5 1017.5 631.5 1018.5 633.5C1020.5 634.5 1021.5 636.5 1020.5 638.5C1019.5 639.8 1017 640 1014 639.6C1005 638.8 995 637.3 987.5 635.3C985.5 634.8 984.5 634.3 984.5 633.5Z" fill="#0b6a3b" stroke="#000" stroke-width="1.3" stroke-linejoin="round"/>
</svg>
<!-- ===== RIGHT PANEL ===== -->
<div class="a" style="left:1879px;top:65px;width:40px;height:967px;background:#262626"></div>
<div class="a" style="left:1881px;top:64px;width:38px;height:13px;background:#262626"></div>
<svg style="left:1906px;top:69px" width="8" height="6" viewBox="0 0 8 6"><path d="M3.5 0.5L0.8 3L3.5 5.5M7.2 0.5L4.5 3L7.2 5.5" fill="none" stroke="#b0b0b0" stroke-width="1.2"/></svg>
<div class="a" style="left:1882px;top:77px;width:37px;height:96px;background:#323232"></div>
<div class="a" style="left:1891px;top:80px;width:20px;height:4px;background:repeating-linear-gradient(90deg,#1e1e1e 0 1px,transparent 1px 2px)"></div>
<div class="a" style="left:1882px;top:175px;width:37px;height:151px;background:#323232"></div>
<div class="a" style="left:1891px;top:179px;width:20px;height:4px;background:repeating-linear-gradient(90deg,#1e1e1e 0 1px,transparent 1px 2px)"></div>
<div class="a" style="left:1882px;top:328px;width:37px;height:95px;background:#323232"></div>
<div class="a" style="left:1891px;top:332px;width:20px;height:4px;background:repeating-linear-gradient(90deg,#1e1e1e 0 1px,transparent 1px 2px)"></div>
<div class="a" style="left:1882px;top:425px;width:37px;height:67px;background:#323232"></div>
<div class="a" style="left:1891px;top:429px;width:20px;height:4px;background:repeating-linear-gradient(90deg,#1e1e1e 0 1px,transparent 1px 2px)"></div>
<div class="a" style="left:1882px;top:494px;width:37px;height:95px;background:#323232"></div>
<div class="a" style="left:1891px;top:497px;width:20px;height:4px;background:repeating-linear-gradient(90deg,#1e1e1e 0 1px,transparent 1px 2px)"></div>
<div class="a" style="left:1882px;top:591px;width:37px;height:39px;background:#323232"></div>
<div class="a" style="left:1891px;top:595px;width:20px;height:4px;background:repeating-linear-gradient(90deg,#1e1e1e 0 1px,transparent 1px 2px)"></div>
<div class="a" style="left:1882px;top:632px;width:37px;height:400px;background:#303030"></div>
<svg style="left:1892px;top:94px" width="18" height="12" viewBox="0 0 18 12"><rect x="0.6" y="0.6" width="16.8" height="10.8" fill="#c2c2c2"/><rect x="2" y="2" width="4" height="3.6" fill="#6a6a6a"/><rect x="12" y="2" width="4" height="3.6" fill="#6a6a6a"/><rect x="2" y="6.6" width="4" height="3.6" fill="#6a6a6a"/><rect x="7" y="6.6" width="4" height="3.6" fill="#6a6a6a"/><rect x="12" y="6.6" width="4" height="3.6" fill="#6a6a6a"/></svg>
<svg style="left:1891px;top:121px" width="20" height="14" viewBox="0 0 20 14"><path d="M10 0.5C15 0.5 19.5 2.5 19.5 6C19.5 9 16.5 9 15.5 10.5C14.5 12.5 12.5 13.5 9 13.5C4 13.5 0.5 11.5 0.5 8.5C0.5 6.5 2.5 6.5 3.5 5.5C4.5 3 6 0.5 10 0.5Z" fill="#c2c2c2"/><circle cx="4.5" cy="9" r="1.5" fill="#333"/><circle cx="8.5" cy="10.8" r="1.5" fill="#333"/><circle cx="12.5" cy="10.3" r="1.4" fill="#333"/><circle cx="15.5" cy="7.2" r="1.2" fill="#333"/><circle cx="14.8" cy="3.8" r="1.2" fill="#333"/></svg>
<svg style="left:1893px;top:148px" width="17" height="17" viewBox="0 0 17 17"><defs><radialGradient id="rg" cx="0" cy="1" r="1"><stop offset="0" stop-color="#fff"/><stop offset="1" stop-color="#333"/></radialGradient></defs><path d="M0.8 0.8A15.5 15.5 0 0 1 16.3 16.3H0.8Z" fill="url(#rg)" stroke="#c8c8c8" stroke-width="1.2"/></svg>
<svg style="left:1893px;top:190px" width="16" height="15" viewBox="0 0 16 15"><rect x="2" y="2" width="12" height="11" fill="none" stroke="#c2c2c2" stroke-width="1.2" stroke-dasharray="2 1.5"/><rect x="0" y="0" width="3.5" height="3.5" fill="#c2c2c2"/><rect x="12.5" y="0" width="3.5" height="3.5" fill="#c2c2c2"/><rect x="0" y="11.5" width="3.5" height="3.5" fill="#c2c2c2"/><rect x="12.5" y="11.5" width="3.5" height="3.5" fill="#c2c2c2"/><rect x="6.5" y="0" width="3" height="2.5" fill="#c2c2c2"/><rect x="6.5" y="12.5" width="3" height="2.5" fill="#c2c2c2"/><rect x="7.3" y="6.8" width="1.4" height="1.4" fill="#c2c2c2"/></svg>
<svg style="left:1893px;top:216px" width="16" height="19" viewBox="0 0 16 19"><rect x="0" y="0" width="1.2" height="19" fill="#c2c2c2"/><rect x="3" y="3" width="8" height="5.5" fill="#c2c2c2"/><rect x="3" y="10.5" width="13" height="5.5" fill="#c2c2c2"/></svg>
<svg style="left:1893px;top:245px" width="16" height="16" viewBox="0 0 16 16"><rect x="0.6" y="0.6" width="9" height="9" fill="#c2c2c2"/><rect x="6.4" y="6.4" width="9" height="9" fill="#c2c2c2"/><rect x="6.4" y="6.4" width="3.2" height="3.2" fill="#555"/></svg>
<svg style="left:1892px;top:271px" width="19" height="19" viewBox="0 0 19 19"><rect x="4" y="11" width="11" height="8" rx="1.5" fill="#c2c2c2"/><path d="M5 10.5L3 3L5.5 0.5L7 4L6.8 10.5ZM8.5 10.5L9 2L10.5 0L11 4L10 10.5ZM12 10.5L14 4L17 3L19 5.5L14 10.5Z" fill="#c2c2c2"/><path d="M0 6C2 5 3 7 5.5 9" fill="none" stroke="#c2c2c2" stroke-width="1"/></svg>
<svg style="left:1892px;top:299px" width="19" height="19" viewBox="0 0 19 19"><circle cx="9.5" cy="4.5" r="4.3" fill="#c2c2c2"/><circle cx="4.5" cy="10" r="4.3" fill="#c2c2c2"/><circle cx="14.5" cy="10" r="4.3" fill="#c2c2c2"/><path d="M8.5 9H10.5L11.5 16.5H14.5V18H4.5V16.5H7.5Z" fill="#c2c2c2"/></svg>
<svg style="left:1893px;top:344px" width="17" height="13" viewBox="0 0 17 13"><rect x="0" y="0" width="17" height="1.5" fill="#c2c2c2"/><rect x="0" y="4.5" width="17" height="2.2" fill="#c2c2c2"/><rect x="0" y="9.5" width="17" height="3.2" fill="#c2c2c2"/></svg>
<svg style="left:1893px;top:372px" width="17" height="13" viewBox="0 0 17 13"><defs><linearGradient id="g2" x1="0" x2="1"><stop offset="0" stop-color="#fff"/><stop offset="1" stop-color="#222"/></linearGradient></defs><rect x="0.6" y="0.6" width="15.8" height="11.8" fill="url(#g2)" stroke="#c8c8c8" stroke-width="1.2"/></svg>
<svg style="left:1891px;top:397px" width="19" height="19" viewBox="0 0 19 19"><circle cx="6.5" cy="6.5" r="6" fill="#c2c2c2"/><circle cx="11.5" cy="11.5" r="6" fill="#6a6a6a" stroke="#c2c2c2" stroke-width="1.2"/></svg>
<svg style="left:1892px;top:439px" width="18" height="18" viewBox="0 0 18 18"><circle cx="9" cy="9" r="6.3" fill="#c2c2c2"/><circle cx="9" cy="9" r="8.3" fill="none" stroke="#c2c2c2" stroke-width="1" stroke-dasharray="1.6 1.4"/></svg>
<svg style="left:1893px;top:468px" width="17" height="16" viewBox="0 0 17 16"><rect x="5.5" y="0.6" width="11" height="10.5" fill="none" stroke="#c2c2c2" stroke-width="1.2"/><rect x="0.6" y="8" width="5.5" height="5.5" fill="none" stroke="#c2c2c2" stroke-width="1.2"/><rect x="3" y="10.2" width="5.5" height="5.2" fill="none" stroke="#c2c2c2" stroke-width="1.2"/></svg>
<svg style="left:1892px;top:508px" width="18" height="17" viewBox="0 0 18 17"><path d="M9 0.5L17.5 5.5L9 10.5L0.5 5.5Z" fill="#c2c2c2"/><path d="M2.5 8.5L0.5 10L9 15.5L17.5 10L15.5 8.5L9 12.5Z" fill="#c2c2c2"/></svg>
<svg style="left:1893px;top:535px" width="18" height="18" viewBox="0 0 18 18"><path d="M6 1.5H1.5V16.5H16.5V12" fill="none" stroke="#c2c2c2" stroke-width="1.6"/><path d="M9 1H17V9" fill="none" stroke="#c2c2c2" stroke-width="1.6"/><path d="M16.5 1.5L8 10" stroke="#c2c2c2" stroke-width="1.8"/></svg>
<svg style="left:1891px;top:563px" width="19" height="19" viewBox="0 0 19 19"><rect x="0.6" y="0.6" width="10.5" height="11" fill="none" stroke="#c2c2c2" stroke-width="1.2"/><rect x="5" y="6.5" width="13.4" height="11.8" fill="#323232" stroke="#c2c2c2" stroke-width="1.2"/></svg>
<svg style="left:1892px;top:604px" width="18" height="17" viewBox="0 0 18 17"><path d="M2 0.5H16C17 0.5 17.5 1 17.5 2V10.5C17.5 11.5 17 12 16 12H7.5L3.5 16.5V12H2C1 12 0.5 11.5 0.5 10.5V2C0.5 1 1 0.5 2 0.5Z" fill="#c2c2c2"/></svg>
<!-- ===== STATUS ===== -->
<div class="a" style="left:74px;top:990px;width:1805px;height:2px;background:#262626"></div>
<div class="a" style="left:74px;top:992px;width:1789px;height:23px;background:#323232"></div>
<div class="a" style="left:74px;top:1015px;width:1789px;height:17px;background:#2e2e2e"></div>
<div class="a" style="left:579px;top:1015px;width:1284px;height:17px;background:#282828"></div>
<div class="a" style="left:1863px;top:1015px;width:16px;height:17px;background:#333333"></div>
<div class="a" style="left:1879px;top:65px;width:2px;height:967px;background:#1f1f1f"></div>
<svg style="left:79px;top:995px" width="15" height="15" viewBox="0 0 15 15"><circle cx="7.5" cy="7.5" r="7" fill="#bdbdbd"/><text x="7.5" y="11.3" font-family="Liberation Sans" font-weight="700" font-size="10.5" fill="#323232" text-anchor="middle">?</text></svg>
<div class="t" style="left:104px;top:997px;font-size:9.7px;font-weight:700;color:#a8a8a8">Click the object to select</div><div class="a" style="left:223px;top:998px;width:1px;height:9px;background:#a0a0a0"></div><div class="t" style="left:232px;top:997px;font-size:9.7px;font-weight:700;color:#a8a8a8;letter-spacing:0.01px">Shift+Click to select multiple object</div><div class="a" style="left:404px;top:998px;width:1px;height:9px;background:#a0a0a0"></div><div class="t" style="left:412px;top:997px;font-size:9.7px;font-weight:700;color:#a8a8a8;letter-spacing:0.05px">Alt+Drag the object to duplicate</div>
<div class="a" style="left:78px;top:1016px;width:68px;height:17px;background:#262626;border:1px solid #3a3a3a;border-radius:3px 3px 0 0"></div>
<div class="a" style="left:128px;top:1017px;width:1px;height:15px;background:#3a3a3a"></div>
<div class="t" style="left:81px;top:1022px;font-size:10px;color:#d0d0d0">88.89%</div>
<svg style="left:134px;top:1023px" width="9" height="6" viewBox="0 0 9 6"><path d="M0.8 0.8L4.5 4.6L8.2 0.8" fill="none" stroke="#c8c8c8" stroke-width="1.3"/></svg>
<div class="a" style="left:150px;top:1016px;width:69px;height:17px;background:#262626;border:1px solid #3a3a3a;border-radius:3px 3px 0 0"></div>
<div class="a" style="left:201px;top:1017px;width:1px;height:15px;background:#3a3a3a"></div>
<div class="t" style="left:153px;top:1022px;font-size:10px;color:#d0d0d0">0°</div>
<svg style="left:207px;top:1023px" width="9" height="6" viewBox="0 0 9 6"><path d="M0.8 0.8L4.5 4.6L8.2 0.8" fill="none" stroke="#c8c8c8" stroke-width="1.3"/></svg>
<div class="a" style="left:261px;top:1016px;width:58px;height:17px;background:#262626;border:1px solid #3a3a3a;border-radius:3px 3px 0 0"></div>
<div class="a" style="left:301px;top:1017px;width:1px;height:15px;background:#3a3a3a"></div>
<div class="t" style="left:264px;top:1022px;font-size:10px;color:#d0d0d0">1</div>
<svg style="left:307px;top:1023px" width="9" height="6" viewBox="0 0 9 6"><path d="M0.8 0.8L4.5 4.6L8.2 0.8" fill="none" stroke="#c8c8c8" stroke-width="1.3"/></svg>
<svg style="left:229px;top:1019px" width="12" height="9" viewBox="0 0 12 9"><rect x="0" y="0" width="1.6" height="9" fill="#5a5a5a"/><path d="M9 0L3 4.5L9 9Z" fill="#5a5a5a"/></svg>
<svg style="left:244px;top:1019px" width="7" height="9" viewBox="0 0 7 9"><path d="M6 0L0 4.5L6 9Z" fill="#5a5a5a"/></svg>
<svg style="left:328px;top:1019px" width="7" height="9" viewBox="0 0 7 9"><path d="M0 0L6 4.5L0 9Z" fill="#5a5a5a"/></svg>
<svg style="left:343px;top:1019px" width="12" height="9" viewBox="0 0 12 9"><path d="M0 0L6 4.5L0 9Z" fill="#5a5a5a"/><rect x="8" y="0" width="1.6" height="9" fill="#5a5a5a"/></svg>
<div class="a" style="left:361px;top:1016px;width:1px;height:16px;background:#262626"></div>
<div class="a" style="left:560px;top:1016px;width:1px;height:16px;background:#262626"></div>
<div class="t" style="left:441px;top:1021px;font-size:10px;color:#b8b8b8">Selection</div>
<svg style="left:567px;top:1020px" width="7" height="8" viewBox="0 0 7 8"><path d="M0 0L6.5 4L0 8Z" fill="#c8c8c8"/></svg>
<svg style="left:584px;top:1019px" width="6" height="9" viewBox="0 0 6 9"><path d="M5 0.8L1 4.5L5 8.2" fill="none" stroke="#7a7a7a" stroke-width="1.2"/></svg>
<svg style="left:1852px;top:1019px" width="6" height="9" viewBox="0 0 6 9"><path d="M1 0.8L5 4.5L1 8.2" fill="none" stroke="#7a7a7a" stroke-width="1.2"/></svg>
<div class="a" style="left:1208px;top:1017px;width:26px;height:13px;background:#3c3c3c;border-radius:7px"></div>
<!-- ===== TASKBAR ===== -->
<div class="a" style="left:0;top:1032px;width:1919px;height:16px;background:linear-gradient(90deg,#1b1a2c 0%,#142436 18%,#16282c 38%,#1c2a22 52%,#231f24 68%,#2c1a2a 85%,#311a2e 100%)"></div>
<div class="a" style="left:0;top:1032px;width:1919px;height:1px;background:rgba(255,255,255,0.12)"></div>
<!-- ===== FLOATING BAR ===== -->
<div class="a" style="left:793px;top:924px;width:351px;height:36px;background:#323232;border:1px solid #262626;border-radius:4px"></div>
<div class="a" style="left:799px;top:928px;width:4px;height:27px;background:#b0b0b0;border-radius:2px"></div>
<div class="a" style="left:813px;top:928px;width:121px;height:28px;border:1px solid #555;border-radius:3px"></div>
<div class="a" style="left:938px;top:928px;width:138px;height:28px;border:1px solid #555;border-radius:3px"></div>
<svg style="left:824px;top:934px" width="16" height="16" viewBox="0 0 16 16"><path d="M0 16L1.5 10.8L11.2 1.1L14.9 4.8L5.2 14.5Z" fill="#c2c2c2"/><path d="M11.8 0.5L13 -0.7L16.7 3L15.5 4.2Z" fill="#c2c2c2"/><path d="M10.5 1.8L14.2 5.5" stroke="#333" stroke-width="0.9"/><path d="M1.5 13L3 14.5L1 15Z" fill="#333"/></svg>
<div class="t" style="left:848px;top:936px;font-size:12.5px;color:#dcdcdc">Draw (Pencil)</div>
<svg style="left:945px;top:933px" width="20" height="18" viewBox="0 0 20 18"><path d="M2.5 9V16.5H16V11" fill="none" stroke="#c2c2c2" stroke-width="1.8"/><path d="M14.5 0.5L15.6 3.9L19 5L15.6 6.1L14.5 9.5L13.4 6.1L10 5L13.4 3.9Z" fill="#c2c2c2"/><path d="M8.5 9.5L9.1 11.3L10.9 11.9L9.1 12.5L8.5 14.3L7.9 12.5L6.1 11.9L7.9 11.3Z" fill="#c2c2c2"/><circle cx="4.3" cy="3.8" r="3.5" fill="#2d8ceb"/></svg>
<div class="t" style="left:969px;top:936px;font-size:12.3px;color:#dcdcdc">Generate Vectors</div>
<svg style="left:1085px;top:935px" width="16" height="16" viewBox="0 0 16 16"><path d="M6.5 13H0.8V0.8H13V6" fill="none" stroke="#c2c2c2" stroke-width="1.3"/><path d="M1 12.5L4 7L6.5 10L7 12.5Z" fill="#c2c2c2"/><circle cx="10" cy="4" r="1.2" fill="#c2c2c2"/><circle cx="11" cy="11" r="4.3" fill="#c2c2c2"/><path d="M11 8.5V13.5M8.5 11H13.5" stroke="#333" stroke-width="1.3"/></svg>
<svg style="left:1114px;top:940px" width="16" height="5" viewBox="0 0 16 5"><circle cx="2.2" cy="2.5" r="1.8" fill="#c2c2c2"/><circle cx="8" cy="2.5" r="1.8" fill="#c2c2c2"/><circle cx="13.8" cy="2.5" r="1.8" fill="#c2c2c2"/></svg>
<div class="a" style="left:0;top:1032px;width:1919px;height:16px;overflow:hidden">
<div class="a" style="left:19px;top:10px;width:13px;height:8px;background:#8fb0d8;border-radius:5px;"></div>
<div class="a" style="left:30px;top:5px;width:17px;height:17px;background:#f07d8a;border-radius:9px;"></div>
<div class="t" style="left:35px;top:6px;font-size:12px;color:#222">3</div>
<div class="t" style="left:51px;top:10px;font-size:12px;color:#fff;font-weight:400">70°F</div>
<div class="a" style="left:529px;top:12px;width:11px;height:10px;background:#4cc2ff;border-radius:1px;"></div>
<div class="a" style="left:541px;top:12px;width:11px;height:10px;background:#4cc2ff;border-radius:1px;"></div>
<div class="a" style="left:567px;top:8px;width:216px;height:20px;background:#2c2c34;border-radius:10px;border:1px solid #4a4a52"></div>
<div class="a" style="left:736px;top:13px;width:5px;height:5px;background:#e8a33a;border-radius:2px;"></div>
<div class="a" style="left:802px;top:13px;width:18px;height:10px;background:#f4f4f4;border-radius:1px;"></div>
<div class="a" style="left:843px;top:12px;width:21px;height:18px;background:#1fb3c8;border-radius:10px;"></div>
<div class="a" style="left:887px;top:12px;width:20px;height:18px;background:#e03a2e;border-radius:10px;"></div>
<div class="a" style="left:931px;top:13px;width:20px;height:10px;background:#7a7a7a;border-radius:3px;"></div>
<div class="a" style="left:973px;top:13px;width:24px;height:10px;background:#e8b12a;border-radius:2px;"></div>
<div class="a" style="left:1022px;top:13px;width:13px;height:10px;background:transparent;border-radius:2px;border:2px solid #2aa3f0"></div>
<div class="a" style="left:1068px;top:13px;width:13px;height:10px;background:#2b8de0;border-radius:3px;"></div>
<div class="a" style="left:1105px;top:14px;width:23px;height:10px;background:#1f86d8;border-radius:1px;"></div>
<div class="a" style="left:1149px;top:12px;width:24px;height:10px;background:#4caf38;border-radius:1px;"></div>
<div class="a" style="left:1193px;top:12px;width:24px;height:10px;background:#e8173a;border-radius:1px;"></div>
<div class="a" style="left:1240px;top:12px;width:18px;height:18px;background:#1ed760;border-radius:9px;"></div>
<div class="a" style="left:1282px;top:14px;width:22px;height:10px;background:#0e2a4a;border-radius:4px;"></div>
<div class="a" style="left:1317px;top:4px;width:40px;height:16px;background:#2e323c;border-radius:4px;"></div>
<div class="a" style="left:1327px;top:14px;width:20px;height:10px;background:#4a0a12;border-radius:3px;"></div>
<div class="a" style="left:1371px;top:14px;width:20px;height:10px;background:#5a0e2e;border-radius:3px;"></div>
<div class="t" style="left:1851px;top:11px;font-size:12px;color:#fff">11:03 PM</div>
</div>
</body></html>
